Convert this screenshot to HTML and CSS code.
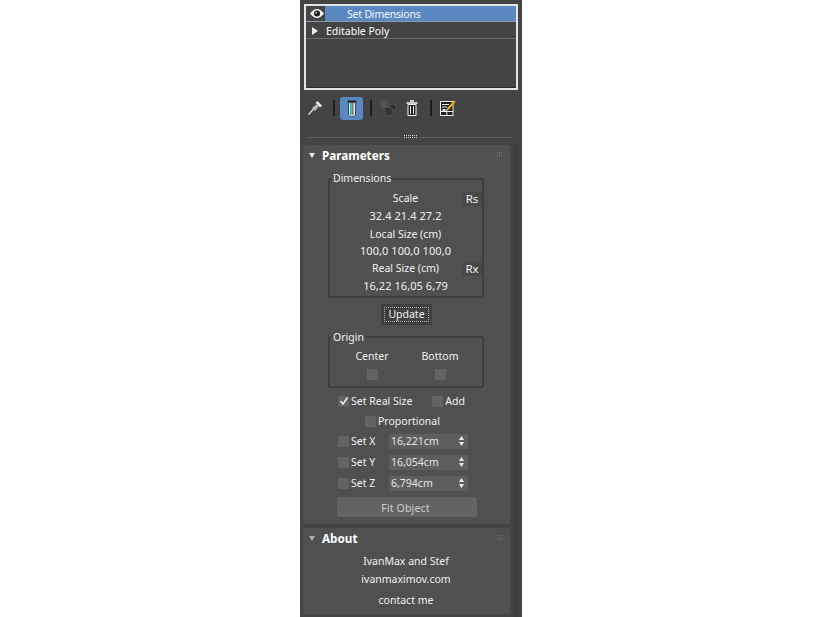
FILE: index.html
```html
<!DOCTYPE html>
<html lang="en">
<head>
<meta charset="utf-8">
<title>Set Dimensions</title>
<link rel="stylesheet" href="styles.css">
</head>
<body>
<main class="panel">
  <section class="stack">
    <div class="stack-row selected">
      <span class="eye"><svg width="14" height="9" viewBox="0 0 14 9"><path d="M0 4.500C2.500 1.200 4.800 0 7 0S11.500 1.200 14 4.500C11.500 7.800 9.200 9 7 9S2.500 7.800 0 4.500Z" fill="#f4f4f4"/><circle cx="7" cy="4.500" r="3" fill="#1a1a1a"/><circle cx="6.200" cy="3.800" r="0.900" fill="#ddd"/></svg></span>
      <span class="stack-label">Set Dimensions</span>
    </div>
    <div class="stack-row sub">
      <span class="arrow-right"></span>
      <span>Editable Poly</span>
    </div>
  </section>

  <nav class="toolbar">
    <svg class="tool pin" width="14" height="14" viewBox="0 0 14 14"><path d="M0.500 13.500L5.500 8" stroke="#e4e4e4" stroke-width="1.200"/><path d="M4 7L8.500 3.500L10.500 5.500L7 10Z" fill="#bdbdbd"/><path d="M8.500 1L13 5.500" stroke="#ececec" stroke-width="2.600"/></svg>
    <span class="sep first"></span>
    <span class="tool-active"><svg width="10" height="17" viewBox="0 0 10 17"><rect x="0.500" y="0.500" width="9" height="2" fill="#262626"/><path d="M1.500 2.500H8.500V14.500Q8.500 16.500 5 16.500T1.500 14.500Z" fill="#f0f0f0" stroke="#2a2a2a" stroke-width="0.800"/><rect x="3" y="3" width="1.800" height="12" fill="#22c2cc"/><rect x="4.800" y="3" width="1.800" height="12" fill="#7c7c7c"/></svg></span>
    <span class="sep second"></span>
    <svg class="tool graph" width="18" height="18" viewBox="0 0 18 18"><circle cx="5" cy="5" r="4" fill="#565656"/><circle cx="13.500" cy="9" r="3.800" fill="#303030" stroke="#585858"/><circle cx="9.500" cy="12.500" r="4.500" fill="#343434" stroke="#585858"/></svg>
    <svg class="tool trash" width="12" height="16" viewBox="0 0 12 16"><path d="M4 1H8M0.500 3H11.500" stroke="#f2f2f2" stroke-width="1.500"/><path d="M2 4.500H10V15.500H2Z" fill="#1f1f1f" stroke="#f2f2f2"/><path d="M4.500 6V14M7.500 6V14" stroke="#f2f2f2"/></svg>
    <span class="sep third"></span>
    <svg class="tool config" width="16" height="16" viewBox="0 0 16 16"><rect x=".5" y="1.500" width="12.500" height="14" fill="#1f1f1f" stroke="#f0f0f0"/><path d="M2 4.500H9M2 7H7M6.800 9V15M1 11.500H13" stroke="#f0f0f0"/><rect x="2.500" y="9" width="3" height="2" fill="#eee"/><path d="M7.500 9.500L14.800 1" stroke="#f2aa17" stroke-width="2"/></svg>
  </nav>

  <div class="divider"><span class="line"></span><span class="grip"></span><span class="line"></span></div>

  <div class="rollouts">
    <section class="rollout params">
      <header class="rollout-head"><span class="arrow-down"></span><h2>Parameters</h2><span class="dots"></span></header>

      <div class="group dims">
        <span class="legend">Dimensions</span>
        <div class="dim-row h-scale">Scale<span class="mini">Rs</span></div>
        <div class="dim-row num h-val1">32.4 21.4 27.2</div>
        <div class="dim-row h-local">Local Size (cm)</div>
        <div class="dim-row num h-val2">100,0 100,0 100,0</div>
        <div class="dim-row h-real">Real Size (cm)<span class="mini">Rx</span></div>
        <div class="dim-row num h-val3">16,22 16,05 6,79</div>
      </div>

      <div class="update-wrap"><span class="update"><span class="update-in">Update</span></span></div>

      <div class="group origin">
        <span class="legend">Origin</span>
        <div class="origin-col"><span>Center</span><span class="box"></span></div>
        <div class="origin-col"><span>Bottom</span><span class="box"></span></div>
      </div>

      <div class="check-row real"><span class="box checked"><svg width="10" height="10" viewBox="0 0 10 10"><path d="M1.500 5L4 8L8.500 1.500" fill="none" stroke="#eee" stroke-width="1.600"/></svg></span><span>Set Real Size</span><span class="box add-box"></span><span>Add</span></div>
      <div class="check-row prop"><span class="box"></span><span>Proportional</span></div>

      <div class="set-row"><span class="box"></span><span class="set-label">Set X</span><span class="spinner"><span class="spin-v">16,221cm</span><svg class="spin-a" width="5" height="10" viewBox="0 0 5 10"><path d="M2.500 0L5 4H0ZM2.500 10L0 6H5Z" fill="#eee"/></svg></span></div>
      <div class="set-row"><span class="box"></span><span class="set-label">Set Y</span><span class="spinner"><span class="spin-v">16,054cm</span><svg class="spin-a" width="5" height="10" viewBox="0 0 5 10"><path d="M2.500 0L5 4H0ZM2.500 10L0 6H5Z" fill="#eee"/></svg></span></div>
      <div class="set-row"><span class="box"></span><span class="set-label">Set Z</span><span class="spinner"><span class="spin-v">6,794cm</span><svg class="spin-a" width="5" height="10" viewBox="0 0 5 10"><path d="M2.500 0L5 4H0ZM2.500 10L0 6H5Z" fill="#eee"/></svg></span></div>

      <div class="fit">Fit Object</div>
    </section>

    <section class="rollout about">
      <header class="rollout-head"><span class="arrow-down dim"></span><h2>About</h2><span class="dots"></span></header>
      <p class="a1">IvanMax and Stef</p>
      <p class="a2">ivanmaximov.com</p>
      <p class="a3">contact me</p>
    </section>
  </div>
</main>
</body>
</html>
```
FILE: styles.css
```css
* { box-sizing: border-box; }
html, body { margin: 0; height: 100%; background: #fff; overflow: hidden; }
body { display: flex; justify-content: center; }
.panel {
  width: 222px; height: 617px; background: #444;
  color: #f0f0f0; font: 10.5px/14px "Noto Sans", "Open Sans", sans-serif;
  padding: 4px 4px 0 3px; flex: none;
}
h2, p { margin: 0; }

.stack { margin-left: 1px; width: 214px; height: 86px; border: 2px solid #e4e4e4; background: #444; box-shadow: inset 0 -1px #2f2f2f; }
.stack-row { height: 17px; display: flex; align-items: center; border-bottom: 1px solid #6a6a6a; }
.stack-row.selected { height: 16px; background: #5c88c1; border-bottom-color: #8a9bb0; }
.eye { width: 19px; height: 15px; background: #444; display: flex; align-items: center; justify-content: flex-end; padding-right: 1px; }
.stack-label { margin-left: 22px; color: #f2f6fc; letter-spacing: -0.2px; }
.sub { gap: 8px; padding: 1px 0 0 6px; height: 17px; color: #fff; }
.arrow-right { width: 0; height: 0; border-left: 6px solid #eee; border-top: 4px solid transparent; border-bottom: 4px solid transparent; }

.toolbar { display: flex; align-items: center; height: 24px; margin-top: 6px; padding-left: 5px; }
.sep { width: 2px; height: 16px; background: #1d1d1d; flex: none; }
.sep.first { margin-left: 11px; }
.sep.second { margin-left: 7px; }
.sep.third { margin-left: 12px; }
.tool { flex: none; }
.tool-active { margin-left: 5px; width: 23px; height: 23px; background: #5c88c1; border-radius: 3px; display: flex; align-items: center; justify-content: center; flex: none; }
.graph { margin-left: 7px; }
.trash { margin-left: 9px; }
.config { margin-left: 8px; }

.divider { display: flex; align-items: center; gap: 3px; margin: 15px 6px 0 5px; height: 4px; }
.line { flex: 1; height: 1px; background: #606060; }
.grip { width: 14px; height: 4px; background: conic-gradient(#d4d4d4 25%, transparent 0) 0 0 / 2px 2px; }

.rollouts { margin-top: 6px; width: 207px; display: flex; flex-direction: column; gap: 4px; position: relative; }
.rollouts::after { content: ""; position: absolute; left: 210px; top: 0; width: 6px; height: 472px; background: #3e3e3e; }
.rollout { background: #505050; border-radius: 2px; display: flow-root; }
.params { height: 379px; }
.about { height: 86px; text-align: center; }
.rollout-head { height: 20px; display: flex; align-items: center; padding: 0 8px 0 6px; color: #fff; }
.rollout-head h2 { font: 700 11.700px/14px "Noto Sans", sans-serif; margin-left: 7px; flex: 1; text-align: left; }
.arrow-down { width: 0; height: 0; border-top: 5px solid #eee; border-left: 3.500px solid transparent; border-right: 3.500px solid transparent; }
.arrow-down.dim { border-top-color: #aaa; }
.dots { width: 6px; height: 6px; background: conic-gradient(#727272 25%, transparent 0) 0 0 / 2px 2px; }

.group { position: relative; margin-left: 25px; width: 156px; border: 2px solid #3e3e3e; border-radius: 2px; }
.legend { position: absolute; left: 2px; top: -8px; padding: 0 1px; background: #505050; line-height: 14px; }
.dims .legend { top: -9px; }
.dims { margin-top: 13px; height: 120px; display: flex; flex-direction: column; }
.dim-row { position: relative; text-align: center; height: 18px; line-height: 18px; padding-right: 1px; }
.num { font-size: 11px; letter-spacing: 0.06px; }
.h-scale { margin-top: 9px; }
.h-real { height: 17px; line-height: 19px; }
.h-val2 { height: 16px; line-height: 15px; }
.h-val3 { height: 19px; line-height: 20px; }
.mini { position: absolute; right: 0; top: 3px; width: 20px; height: 14px; background: #484848; line-height: 14px; text-align: center; font-size: 11.500px; }

.update-wrap { display: flex; justify-content: center; margin-top: 6px; }
.update { width: 51px; height: 21px; background: #3f3f3f; padding: 3px; display: block; }
.update-in { display: block; height: 15px; line-height: 13px; border: 1px dotted #b0b0b0; text-align: center; }

.origin { margin-top: 11px; height: 52px; display: flex; padding: 11px 0 0 25px; gap: 34px; }
.origin-col { width: 34px; display: flex; flex-direction: column; align-items: center; gap: 6px; }
.origin-col span:first-child { white-space: nowrap; }
.box { width: 11px; height: 11px; background: #636363; display: block; flex: none; }

.check-row { display: flex; align-items: center; height: 14px; gap: 2px; }
.real { margin: 6px 0 0 35px; }
.add-box { margin-left: 18px; }
.prop { margin: 6px 0 0 62px; }
.checked { display: flex; align-items: center; justify-content: center; }

.set-row { display: flex; align-items: center; height: 16px; margin: 5px 0 0 35px; }
.set-label { margin-left: 2px; width: 38px; flex: none; }
.spinner { width: 79px; height: 15px; background: #5e5e5e; display: flex; align-items: center; justify-content: space-between; padding: 0 3px 0 2px; color: #e4e4e4; flex: none; }
.spin-a { flex: none; margin-right: 1px; }

.fit { margin: 6px 0 0 34px; width: 140px; height: 20px; background: #636363; border-radius: 3px; text-align: center; line-height: 22px; letter-spacing: 0.15px; padding-right: 3px; color: #cfcfcf; }

.about p { padding-right: 1px; }
.a1 { margin-top: 5px; height: 16px; line-height: 16px; }
.a2 { margin-top: 2px; height: 16px; line-height: 16px; }
.a3 { margin-top: 5px; height: 16px; line-height: 16px; }
```
